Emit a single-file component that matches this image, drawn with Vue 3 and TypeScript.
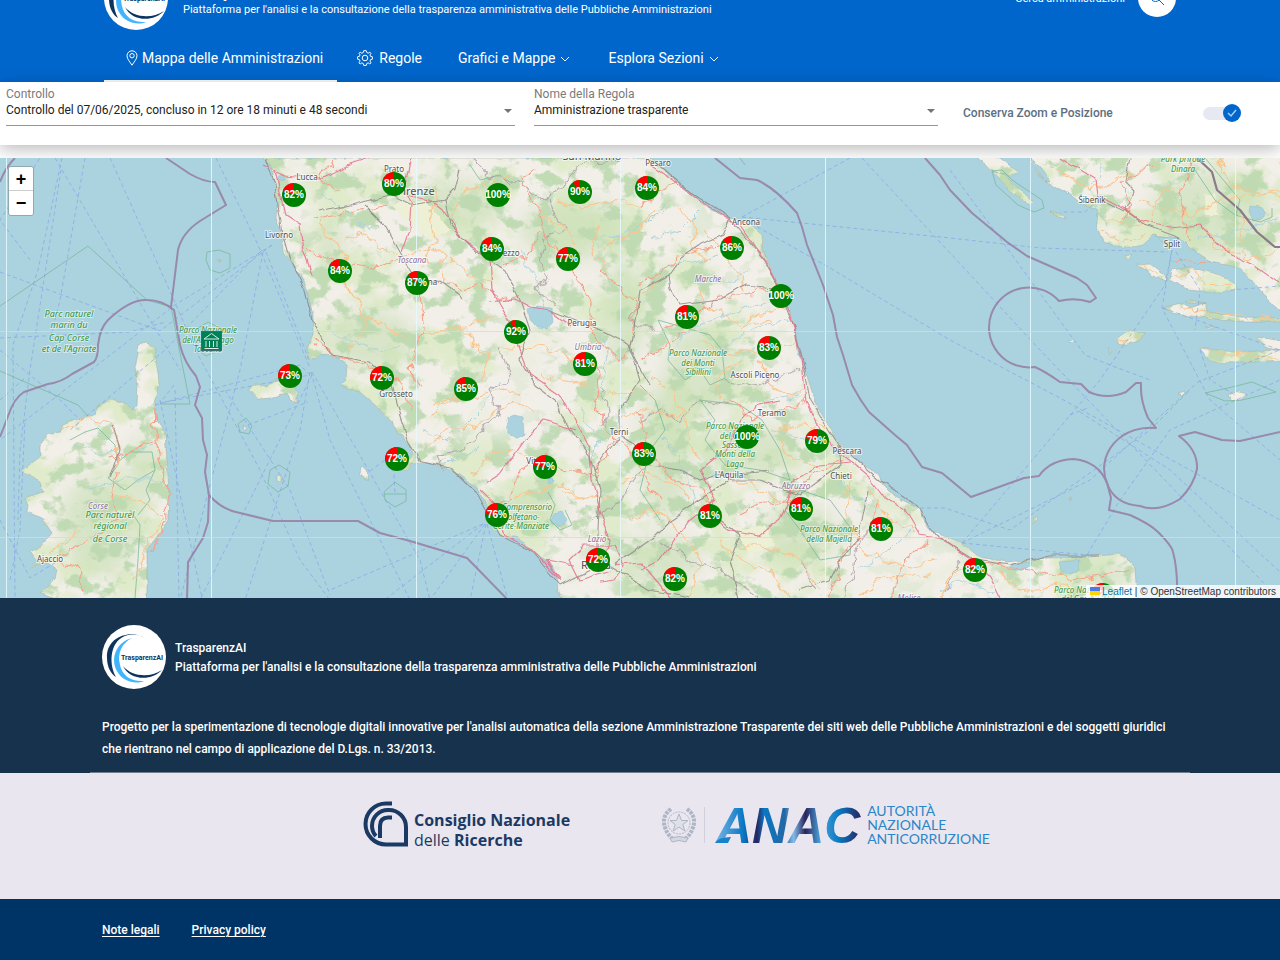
<script setup lang="ts">
import { ref } from 'vue'

interface Marker { x: number; y: number; pct: number }
interface Place { x: number; y: number; text: string; kind: 'town' | 'city' | 'region' | 'park' | 'bigpark' }

const keepView = ref(true)
const control = ref('Controllo del 07/06/2025, concluso in 12 ore 18 minuti e 48 secondi')
const rule = ref('Amministrazione trasparente')

const markers: Marker[] = [
  [294, 195, 82], [394, 184, 80], [498, 195, 100], [580, 192, 90], [647, 188, 84],
  [492, 249, 84], [568, 259, 77], [732, 248, 86], [340, 271, 84], [417, 283, 87],
  [781, 296, 100], [516, 332, 92], [687, 317, 81], [769, 348, 83], [585, 364, 81],
  [290, 376, 73], [382, 378, 72], [466, 389, 85], [397, 459, 72], [545, 467, 77],
  [644, 454, 83], [747, 437, 100], [817, 441, 79], [497, 515, 76], [710, 516, 81],
  [801, 509, 81], [881, 529, 81], [598, 560, 72], [675, 579, 82], [975, 570, 82], [1103, 595, 82],
].map(([x, y, pct]) => ({ x, y, pct }))

function wedge(m: Marker): string {
  const a = ((100 - m.pct) / 100) * Math.PI * 2
  const x = (m.x - Math.sin(a) * 12).toFixed(2)
  const y = (m.y - Math.cos(a) * 12).toFixed(2)
  return `M${m.x} ${m.y}V${m.y - 12}A12 12 0 0 0 ${x} ${y}Z`
}

const places: Place[] = [
  { x: 307, y: 180, text: 'Lucca', kind: 'town' },
  { x: 394, y: 172, text: 'Prato', kind: 'town' },
  { x: 416, y: 195, text: 'Firenze', kind: 'city' },
  { x: 658, y: 166, text: 'Pesaro', kind: 'town' },
  { x: 279, y: 238, text: 'Livorno', kind: 'town' },
  { x: 507, y: 256, text: 'Arezzo', kind: 'town' },
  { x: 427, y: 285, text: 'Siena', kind: 'town' },
  { x: 582, y: 326, text: 'Perugia', kind: 'town' },
  { x: 746, y: 225, text: 'Ancona', kind: 'town' },
  { x: 755, y: 378, text: 'Ascoli Piceno', kind: 'town' },
  { x: 772, y: 416, text: 'Teramo', kind: 'town' },
  { x: 847, y: 454, text: 'Pescara', kind: 'town' },
  { x: 841, y: 479, text: 'Chieti', kind: 'town' },
  { x: 729, y: 478, text: 'L\'Aquila', kind: 'town' },
  { x: 619, y: 435, text: 'Terni', kind: 'town' },
  { x: 540, y: 464, text: 'Viterbo', kind: 'town' },
  { x: 396, y: 397, text: 'Grosseto', kind: 'town' },
  { x: 596, y: 569, text: 'Roma', kind: 'city' },
  { x: 50, y: 562, text: 'Ajaccio', kind: 'town' },
  { x: 1172, y: 247, text: 'Split', kind: 'town' },
  { x: 1092, y: 203, text: 'Šibenik', kind: 'town' },
  { x: 592, y: 160, text: 'San Marino', kind: 'city' },
  { x: 412, y: 263, text: 'Toscana', kind: 'region' },
  { x: 588, y: 350, text: 'Umbria', kind: 'region' },
  { x: 708, y: 282, text: 'Marche', kind: 'region' },
  { x: 796, y: 489, text: 'Abruzzo', kind: 'region' },
  { x: 597, y: 542, text: 'Lazio', kind: 'region' },
  { x: 98, y: 509, text: 'Corse', kind: 'region' },
  { x: 909, y: 601, text: 'Molise', kind: 'region' },
  { x: 69, y: 317, text: 'Parc naturel', kind: 'bigpark' },
  { x: 69, y: 328, text: 'marin du', kind: 'bigpark' },
  { x: 69, y: 341, text: 'Cap Corse', kind: 'bigpark' },
  { x: 69, y: 352, text: 'et de l\'Agriate', kind: 'bigpark' },
  { x: 110, y: 518, text: 'Parc naturel', kind: 'bigpark' },
  { x: 110, y: 529, text: 'régional', kind: 'bigpark' },
  { x: 110, y: 542, text: 'de Corse', kind: 'bigpark' },
  { x: 208, y: 333, text: 'Parco Nazionale', kind: 'park' },
  { x: 208, y: 343, text: 'dell\'Arcipelago', kind: 'park' },
  { x: 208, y: 352, text: 'Toscano', kind: 'park' },
  { x: 698, y: 356, text: 'Parco Nazionale', kind: 'park' },
  { x: 698, y: 366, text: 'dei Monti', kind: 'park' },
  { x: 698, y: 375, text: 'Sibillini', kind: 'park' },
  { x: 735, y: 429, text: 'Parco Nazionale', kind: 'park' },
  { x: 735, y: 439, text: 'del Gran', kind: 'park' },
  { x: 735, y: 448, text: 'Sasso e', kind: 'park' },
  { x: 735, y: 457, text: 'Monti della', kind: 'park' },
  { x: 735, y: 467, text: 'Laga', kind: 'park' },
  { x: 829, y: 532, text: 'Parco Nazionale', kind: 'park' },
  { x: 829, y: 542, text: 'della Majella', kind: 'park' },
  { x: 527, y: 510, text: 'Comprensorio', kind: 'park' },
  { x: 522, y: 520, text: 'Tolfetano-', kind: 'park' },
  { x: 521, y: 529, text: 'Cerite-Manziate', kind: 'park' },
  { x: 1183, y: 162, text: 'Park prirode', kind: 'park' },
  { x: 1183, y: 172, text: 'Dinara', kind: 'park' },
  { x: 1083, y: 593, text: 'Parco Nazionale', kind: 'park' },
  { x: 1083, y: 602, text: 'del Gargano', kind: 'park' },
]

const italy = 'M263 158L272 168L275 185L277 205L276 218L282 235L283 252L293 263L302 278L308 295L313 315L313 335L307 347L308 359L315 359L320 355L335 356L347 365L346 380L341 385L350 390L360 392L375 405L387 417L393 423L398 434L403 436L410 447L412 455L402 468L408 471L412 463L422 462L443 467L460 475L477 488L483 498L493 515L500 537L517 537L533 552L550 563L557 575L558 593L562 600H1136L1136 585L1135 567L1126 558L1118 554L1089 557L1048 558L1007 562L979 557L962 543L930 530L922 518L920 508L895 497L883 485L879 475L860 463L840 445L832 432L815 402L807 375L805 372L798 352L795 328L788 308L777 285L770 268L763 248L762 235L748 223L730 218L712 210L692 195L673 178L650 158Z'
const corsica = 'M138 345L147 343L156 347L155 358L158 372L159 385L154 403L155 417L165 433L167 462L169 492L168 520L158 535L147 550L147 600H57L40 593L47 587L55 578L57 570L48 563L43 563L30 568L37 562L30 552L40 547L52 533L42 518L27 512L28 505L25 498L43 492L40 482L30 475L22 471L32 463L40 457L40 445L48 435L60 432L63 425L80 418L95 415L98 405L110 399L123 402L132 410L137 405L138 385L135 368L138 355Z'
const elba = 'M249 390L255 383L267 387L277 380L290 378L297 392L297 402L290 400L287 393L273 398L257 399Z'
const croatia = 'M1027 156L1040 175L1053 187L1067 192L1083 205L1097 210L1097 227L1103 242L1123 248L1143 244L1153 235L1180 238L1190 248L1210 262L1237 267L1250 278L1267 298L1282 312V156Z'
const islands = 'M1172 270L1190 267L1220 275L1237 285L1235 290L1215 293L1190 290L1170 280ZM1137 265L1150 264L1165 275L1167 281L1155 277ZM1163 308L1180 303L1190 308L1205 303L1208 312L1240 317L1282 318V322L1240 322L1200 317L1180 315ZM1117 337L1130 330L1145 333L1138 342L1120 345ZM1200 348L1235 352L1282 350V360L1240 363L1210 362ZM1257 337L1282 341V350L1265 348ZM977 156L1000 158L1018 172L1012 176L990 170ZM994 172L1004 174L1020 190L1034 202L1028 204L1010 192ZM1030 158L1040 166L1050 182L1044 180ZM1050 211L1060 214L1066 219L1058 217ZM1125 256L1132 255L1128 260ZM1205 327L1216 327L1210 329ZM1068 341L1075 339L1071 343ZM1109 346L1112 352L1109 355ZM1228 395L1236 391L1246 394L1241 400L1232 401ZM1178 393L1186 391L1182 395ZM1205 303L1190 300L1186 303ZM243 425L247 428L244 431ZM277 475L281 476L281 482L277 481ZM361 467L367 470L370 480L365 480L360 474ZM1031 522L1036 515L1037 518L1033 524ZM1069 499L1071 498L1071 501ZM218 259L221 259L220 262Z'

const lakes = 'M528 310L537 306L551 308L553 322L548 328L538 327L530 320ZM507 418L514 415L523 417L524 435L518 439L508 433ZM553 514L562 512L567 520L561 527L552 522ZM549 478L554 480L553 484L548 483ZM278 176L284 175L286 180L280 181ZM1013 564L1032 562L1030 567L1018 570L1010 568ZM1060 562L1080 560L1079 570L1070 574L1062 571ZM1250 206L1260 207L1265 212L1264 218L1253 220L1249 212ZM1155 236L1172 237L1180 242L1168 244Z'

const borders = [
  'M15 158Q5 168 0 182',
  'M166 158L190 174Q204 182 215 182L226 205L200 221Q182 233 178 250L171 307',
  'M0 437Q6 422 8 416Q14 398 24 392L48 384Q62 382 72 374L94 362Q98 358 98 345Q100 328 108 320Q130 299 147 300Q162 300 174 310L180 345Q184 362 196 376L200 387L195 405L202 418L203 440L207 455L205 472L209 495L208 522L203 538L188 562L187 600',
  'M209 495Q222 510 240 513L273 521H358L380 533L410 541L467 558L508 600',
  'M715 158L740 178L757 180Q775 188 797 213L802 227L807 245L823 285L833 315L837 337L843 355L849 375L852 385Q860 400 869 412L895 435L907 445L922 467L942 473L971 497L1024 478L1039 476Q1050 460 1073 459Q1098 461 1107 483L1111 498L1109 510L1130 515Q1150 524 1158 532Q1172 546 1173 552Q1178 570 1177 600',
  'M1107 483A46 41 0 0 1 1156 428L1148 418Q1140 400 1141 383H1136L1126 392Q1107 400 1089 392L1081 384L1060 382Q1046 372 1035 367A40 40 0 1 1 1059 301Q1075 297 1090 302L1096 298L1087 285L1077 278L1027 256L1007 242L972 213L950 190L940 175L925 158',
  'M1107 483Q1114 504 1140 506Q1158 513 1180 499Q1194 485 1197 469Q1198 450 1179 436L1195 432L1222 440L1240 441L1280 432',
]

const ferries = [
  'M55 158L115 260L150 320L180 370', 'M110 158L165 280L198 355L260 470L300 560L330 600', 'M62 158L38 270L13 345L15 600', 'M30 260L0 220L40 158', 'M61 170L30 370L20 450L18 520', 'M0 272L160 331L272 245', 'M272 245L175 305L0 440', 'M262 250L165 350L70 430', 'M263 252L240 370L180 600', 'M266 252L310 362', 'M216 158L258 245L310 368', 'M0 338L130 332L165 322', 'M155 405L300 365L310 375L160 403L174 385', 'M310 372L300 430L245 600', 'M311 372L330 440L410 600', 'M312 372L420 560L430 600', 'M225 390L290 490L330 595', 'M248 425L308 402', 'M312 375L200 600', 'M483 524L330 590', 'M483 524L387 598', 'M485 524L430 600', 'M486 524L470 600', 'M487 524L508 600', 'M370 471L393 454L395 494', 'M175 390L179 600', 'M160 400L202 598', 'M0 350L60 400L80 420', 'M0 520L30 578L60 560', 'M10 580L20 530L25 420', 'M742 217L850 158', 'M742 217L950 238L1040 248L1168 252', 'M745 220L830 268L950 340L1060 398L1280 520', 'M862 158L1040 350L1280 600', 'M950 170L1085 355L1110 365L1150 380', 'M962 543L1100 380L1165 285L1172 250', 'M1172 250L1162 308L1210 400L1280 460', 'M1176 252L1200 290L1195 330', 'M962 543L1090 480L1198 382L1280 350', 'M920 508H945L980 520L1010 530L1150 430L1190 390', 'M962 543L1087 555L1120 500L1170 430L1280 380', 'M1080 412L1170 470L1280 572', 'M1070 415L1090 407', 'M1163 308L1280 350', 'M1230 290L1280 286', 'M1098 200L1085 212L1060 212', 'M1200 350L1210 380L1235 395', 'M0 400L25 378', 'M85 158L60 300L50 340',
]

const reserves = [
  'M0 306L88 246L147 300L171 307L190 404L160 404M0 371L78 405L88 416', 'M207 252L219 250L230 254L230 268L220 273L210 270L206 260Z', 'M195 330L208 322L222 329L220 350L206 356L196 348Z',
  'M238 424L246 418L252 426L249 434L240 432Z', 'M270 470L279 465L290 472L288 486L278 492L268 484Z', 'M384 492L395 482L406 490V501L395 507L385 500ZM384 494H406', 'M992 171L1002 170L1012 180L1042 200L1044 208L1034 212L1018 205L996 185Z', 'M1205 393L1228 388L1252 382L1276 392L1242 400L1225 401Z',
  'M1195 170L1215 200L1235 215L1260 222L1272 217L1272 208M1205 158L1240 200L1235 218', 'M70 440L85 432L98 428L115 445L118 465L108 478L125 490L138 480L155 470M118 462L130 452H152L155 470L146 490L150 500L138 515M130 510L140 525L138 560L135 598', 'M548 492L555 505L550 520L560 530L572 525L565 510', 'M658 320L670 345L668 360L685 380L700 370L710 385L725 378L722 350L710 335Z', 'M700 400L715 420L705 440L725 465L760 470L790 480L780 450L762 420L740 405Z', 'M785 510L800 530L820 560L850 555L852 530L830 500L800 490Z', 'M740 158L745 165M470 165L480 180L500 175L510 185', 'M640 385L655 400L665 430L650 450L640 490L660 520',
]

const motorways = ['M263 165L285 175L320 178L350 165L372 158', 'M275 170L285 215L300 225L303 250L312 275', 'M392 190L410 196L430 200L445 212L462 238L475 247L490 258L492 290L500 305L515 330L520 350L530 375L560 395L575 420L590 450L592 480L600 510L610 540L600 560', 'M412 158L405 190L412 205L410 230L402 252', 'M490 302L515 299L530 307L550 310L570 325', 'M650 165L675 182L705 205L722 215L740 226L755 248L766 262L778 285L790 312L798 345L803 370L806 402L820 430L835 450L855 465L870 478L885 498L905 510L920 535L945 540L975 562L990 578L1000 598', 'M640 570L660 560L690 520L715 500L700 470L725 450L740 420L755 405L780 400', 'M610 570L580 580L570 560L585 545L615 545L625 565L615 580L600 582', 'M615 565L640 562L670 598', 'M710 515L730 530L760 535L780 520L795 480L820 465L850 462', 'M480 490L495 505L505 535L530 548L560 580', 'M1060 158L1095 180L1097 195L1125 210L1140 220L1170 228L1200 225L1225 250L1255 265L1280 283', 'M575 430L545 420L525 440L500 475L485 485', 'M575 565L545 560L560 578']

const trunks = ['M316 220L335 215L360 208L390 205', 'M314 340L345 360L380 370L402 385L410 410', 'M420 285L422 330L412 370L420 390', 'M420 283L450 282L465 290L480 285L500 300L520 295', 'M500 265L525 258L540 235', 'M535 170L520 180L535 205L545 235L570 265L590 300L590 325L600 345L620 360L635 340L635 300L600 270', 'M640 205L660 190L680 178', 'M638 285L665 270L680 255L710 248L740 246', 'M660 330L690 318L715 300L745 293L780 288', 'M640 360L670 342L690 330', 'M600 365L595 400L605 430L625 445L640 470L660 500', 'M547 455L520 470L510 500L495 510', 'M545 465L570 470L595 475L615 440', 'M650 455L675 480L700 490L715 515', 'M730 400L750 420L780 410L805 400', 'M845 460L810 475L790 500L760 505L740 515', 'M880 498L870 530L840 560L830 598', 'M930 540L905 560L890 598', 'M1125 220L1130 205L1120 185L1150 165', 'M1190 158L1180 200L1190 240', 'M1172 260L1210 262', 'M156 405L155 440L166 480L168 520L150 555', 'M113 458L140 445L155 440M115 470L112 500L118 520L80 545L50 560L75 565L85 590', 'M310 250L340 265L370 268L402 260', 'M330 160L320 180L340 190', 'M640 410L645 440L650 455', 'M980 565L1030 570L1070 580L1100 575L1130 570']

const minor = ['M320 220L330 240L345 255L340 280L360 300L365 330L350 350', 'M345 240L365 230L380 250L400 255L430 250L445 255L440 280', 'M360 315L385 325L405 340L425 335L445 330L470 325L495 315', 'M440 185L430 210L435 240L425 260', 'M450 215L465 190L485 185L510 175', 'M450 258L470 275L490 280', 'M460 330L475 345L490 355L480 380L465 390L445 400L430 420', 'M430 405L455 400L480 395L505 390L520 395', 'M430 445L450 430L480 425L500 410L520 400L540 410', 'M470 475L490 455L510 450L530 455', 'M500 350L530 345L560 350L580 365', 'M540 375L560 380L590 385', 'M600 250L615 240L640 230L655 210', 'M560 200L580 210L610 200L640 205', 'M540 215L560 225L575 245', 'M600 225L590 250L605 270', 'M620 300L650 290L665 270', 'M680 210L695 230L690 250L710 260', 'M705 230L720 245L735 270L745 290', 'M700 290L705 305L740 325L770 320', 'M740 330L755 315L785 310', 'M700 340L730 355L760 350L795 345', 'M720 400L715 380L740 360', 'M760 360L770 385L790 395L810 390', 'M650 380L670 390L685 410L690 440L700 460', 'M600 395L630 390L650 395', 'M620 420L640 410L670 415L690 410', 'M620 480L650 475L670 480L690 500', 'M630 520L655 510L680 530L700 560L690 598', 'M560 490L590 500L610 495', 'M515 500L540 490L560 485L590 500', 'M720 540L740 560L770 570L790 598', 'M740 550L760 545L800 560L820 590', 'M770 430L800 425L825 430', 'M780 440L790 460L820 465', 'M730 480L760 490L780 500', 'M850 480L845 510L860 540', 'M870 490L890 520L915 530', 'M855 545L880 560L910 565L940 560', 'M940 598L950 575L970 565', 'M860 598L880 580L930 575', 'M1000 570L1020 590L1060 585L1080 590', 'M1100 220L1130 225L1150 220', 'M1100 230L1120 240L1145 235', 'M1050 165L1075 180L1090 190L1130 175L1160 160', 'M1140 200L1170 210L1190 215L1220 200L1280 190', 'M1150 215L1160 195L1180 190', 'M1240 215L1245 260L1280 250', 'M1220 160L1230 185L1280 195', 'M1205 225L1215 245L1240 255', 'M1175 275L1195 270L1205 285L1235 283', 'M1180 308L1205 312L1280 320', 'M1205 352L1280 358', 'M1120 342L1140 335', 'M62 430L85 420L110 425L118 445L115 465', 'M115 495L140 500L165 520L150 540L135 580', 'M48 550L60 545L80 530', 'M1140 265L1160 275']

const rails = ['M265 158L275 185L283 235L290 260L305 290L313 320L330 355L370 362L390 380L398 410L408 440L420 462L450 468L478 495L500 535L530 550L560 585L590 570', 'M320 212L350 205L370 200L390 195L410 205L445 200L450 225L470 245L490 260L505 270L520 300L530 330L520 360L535 385L555 400L570 430L590 455L600 490L598 530L598 560', 'M365 205L385 225L400 252L420 285L440 280L460 295L462 300', 'M650 158L690 192L730 218L722 235L700 245L680 258L668 275L650 285L640 290L635 330L630 350L650 385', 'M730 218L765 262L780 290L795 330L805 370L810 400L838 445L880 480L920 508L935 535L975 560L1010 565L1050 555L1100 555', 'M620 435L605 455L595 470M620 435L635 445L650 465L680 470L700 480L715 475L770 470', 'M838 445L840 465L800 495L785 490L760 480L730 480L700 500L670 520L650 540L615 565', 'M550 310L575 320L600 330L630 345L640 380L620 410L620 435', 'M715 515L740 535L730 560L740 598', 'M868 490L858 540L840 560L830 580L800 590', 'M600 560L625 575L650 590L690 598', 'M1130 158L1125 180L1135 190L1125 210L1145 225L1180 238', 'M1100 200L1125 212', 'M113 425L120 450L110 480', 'M460 170L455 190L445 200', 'M668 275L670 290L680 305L720 300L745 285L775 288']

const rivers = ['M320 195L340 205L360 225L380 230', 'M330 330L350 340L380 350L400 345', 'M520 250L530 270L540 290L545 310', 'M600 240L620 235L650 220L670 200', 'M650 240L680 230L700 210', 'M660 270L690 262L720 255', 'M680 340L700 325L740 310L780 300', 'M700 280L730 280L750 270', 'M720 350L760 325L790 320', 'M600 330L610 360L600 390', 'M580 410L600 440L590 470', 'M420 430L450 440L480 410L500 380', 'M430 480L450 460L480 450', 'M770 400L800 395', 'M780 430L820 440', 'M840 480L860 500L880 510', 'M660 440L680 460L700 510', 'M860 570L890 550L910 530', 'M940 590L960 580L990 590', 'M75 445L100 455L130 450L155 445', 'M90 490L120 480L165 480', 'M1100 215L1090 190L1105 165', 'M1200 240L1240 230L1280 220']

const admin = ['M470 158L490 175L520 185L545 200L560 190L580 165L620 160', 'M550 200L555 215L565 230L545 240L540 260L550 280L535 290L555 305', 'M640 300L630 320L655 330', 'M500 350L510 380L490 390L500 415L480 430L465 450L440 455L445 470', 'M600 390L610 410L600 425', 'M640 420L660 410L680 420L700 400L730 405', 'M590 520L620 500L640 470L660 460', 'M660 540L690 560L720 570L760 598', 'M800 560L815 590', 'M870 530L855 555L845 598', 'M960 560L945 590', 'M720 380L760 385L800 370']

const bosnia = 'M1197 158L1212 172L1217 190L1240 210L1257 232L1275 247L1280 247'
</script>

<template>
  <div class="page">
    <header class="header">
      <div class="container header-inner">
        <div class="brand-row">
          <svg class="logo" viewBox="0 0 64 64" aria-hidden="true">
            <circle cx="32" cy="32" r="32" fill="#fff" />
            <path d="M43 13C28 4 4 12 5 33C5 42 9 49 14 52C6 38 8 14 26 10C33 9 39 10 43 13Z" fill="#0b3560" />
            <path d="M30 13C14 17 8 34 15 46C20 56 33 60 42 56C30 57 20 51 18 40C15 28 20 18 30 13Z" fill="#3fb4ff" />
            <path d="M21 41C30 52 48 53 60 45C50 56 28 56 21 41Z" fill="#0b3560" />
            <text x="19" y="35" font-size="7" font-weight="700" fill="#0b3560">TrasparenzAI</text>
          </svg>
          <div class="brand-text">
            <strong class="brand-name">TrasparenzAI</strong>
            <span class="brand-tag">Piattaforma per l'analisi e la consultazione della trasparenza amministrativa delle Pubbliche Amministrazioni</span>
          </div>
          <div class="search">
            <span>Cerca amministrazioni</span>
            <button class="search-button" type="button" aria-label="Cerca amministrazioni">
              <svg viewBox="0 0 16 16" width="16" height="16" fill="none" stroke="#06c"><circle cx="6.5" cy="6.5" r="5" /><path d="M10 10L15 15" /></svg>
            </button>
          </div>
        </div>
        <nav class="nav">
          <a href="#mappa" class="nav-link active">
            <svg width="12" height="16" viewBox="0 0 12 16" fill="none" stroke="#fff"><path d="M6 15.2C4 12 1 9 1 5.8A5 5 0 0 1 11 5.800C11 9 8 12 6 15.200Z" /><circle cx="6" cy="5.700" r="2.200" /></svg>
            <span>Mappa delle Amministrazioni</span>
          </a>
          <a href="#regole" class="nav-link rules">
            <svg width="16" height="16" viewBox="0 0 16 16" fill="none" stroke="#fff"><circle cx="8" cy="8" r="2.800" /><path d="M6.700 .7H9.300L9.800 2.600L11.200 3.200L12.900 2.200L14 3.300L13 4.900L13.500 6.300L15.400 6.800V9.200L13.500 9.700L13 11.100L14 12.800L12.800 14L11.200 12.900L9.800 13.500L9.300 15.400H6.700L6.200 13.500L4.800 12.900L3.200 14L2 12.800L3 11.100L2.500 9.700L.6 9.200V6.800L2.500 6.300L3 4.900L2 3.300L3.200 2.100L4.800 3.200L6.200 2.600Z" /></svg>
            <span>Regole</span>
          </a>
          <button type="button" class="nav-link drop">
            <span>Grafici e Mappe</span>
            <svg class="chevron" width="10" height="6" viewBox="0 0 10 6" fill="none" stroke="#fff"><path d="M1 1L5 5L9 1" /></svg>
          </button>
          <button type="button" class="nav-link drop">
            <span>Esplora Sezioni</span>
            <svg class="chevron" width="10" height="6" viewBox="0 0 10 6" fill="none" stroke="#fff"><path d="M1 1L5 5L9 1" /></svg>
          </button>
        </nav>
      </div>
    </header>

    <form class="filters" @submit.prevent>
      <div class="field">
        <label for="control">Controllo</label>
        <select id="control" v-model="control">
          <option>Controllo del 07/06/2025, concluso in 12 ore 18 minuti e 48 secondi</option>
        </select>
      </div>
      <div class="field">
        <label for="rule">Nome della Regola</label>
        <select id="rule" v-model="rule">
          <option>Amministrazione trasparente</option>
        </select>
      </div>
      <div class="toggle">
        <label for="keep">Conserva Zoom e Posizione</label>
        <span class="switch">
          <input id="keep" v-model="keepView" type="checkbox">
          <svg class="tick" width="12" height="10" viewBox="0 0 12 10" fill="none" stroke="#a9cdf5" stroke-width="1.500"><path d="M2 5L5 8L10 2" /></svg>
        </span>
      </div>
    </form>

    <main class="map">
      <svg class="map-canvas" viewBox="0 158 1280 440" preserveAspectRatio="xMidYMid slice" role="img" aria-label="Mappa delle Amministrazioni">
        <defs>
          <clipPath id="land"><path :d="italy + corsica + elba + croatia + islands" /></clipPath>
          <filter id="forest" x="0" y="0" width="100%" height="100%" color-interpolation-filters="sRGB">
            <feTurbulence type="fractalNoise" baseFrequency="0.045 0.052" numOctaves="5" seed="11" />
            <feColorMatrix values="0 0 0 0 .74  0 0 0 0 .85  0 0 0 0 .69  8 0 0 0 -4.200" />
          </filter>
          <filter id="meadow" x="0" y="0" width="100%" height="100%" color-interpolation-filters="sRGB">
            <feTurbulence type="fractalNoise" baseFrequency="0.020 0.024" numOctaves="4" seed="5" />
            <feColorMatrix values="0 0 0 0 .88  0 0 0 0 .92  0 0 0 0 .80  0 7 0 0 -3.400" />
          </filter>
          <filter id="wiggle" x="-5%" y="-5%" width="110%" height="110%">
            <feTurbulence type="fractalNoise" baseFrequency="0.07" numOctaves="3" seed="3" result="n" />
            <feDisplacementMap in="SourceGraphic" in2="n" scale="14" xChannelSelector="R" yChannelSelector="G" />
          </filter>
          <filter id="coast" x="-2%" y="-2%" width="104%" height="104%">
            <feTurbulence type="fractalNoise" baseFrequency="0.12" numOctaves="2" seed="9" result="n" />
            <feDisplacementMap in="SourceGraphic" in2="n" scale="4" xChannelSelector="R" yChannelSelector="G" />
          </filter>
          <filter id="bend" x="-2%" y="-2%" width="104%" height="104%">
            <feTurbulence type="fractalNoise" baseFrequency="0.06" numOctaves="2" seed="9" result="n" />
            <feDisplacementMap in="SourceGraphic" in2="n" scale="7" xChannelSelector="R" yChannelSelector="G" />
          </filter>
          <filter id="soft"><feGaussianBlur stdDeviation="9" /></filter>
        </defs>

        <rect x="-400" y="100" width="2080" height="560" fill="#aad3df" />

        <g filter="url(#coast)">
          <g clip-path="url(#land)">
            <rect y="150" width="1290" height="460" fill="#f2efe9" />
            <rect y="150" width="1290" height="460" filter="url(#meadow)" />
            <g fill="#c6deb2" opacity=".6" filter="url(#soft)">
              <ellipse cx="370" cy="340" rx="45" ry="30" /><ellipse cx="455" cy="205" rx="45" ry="25" /><ellipse cx="330" cy="245" rx="14" ry="28" />
              <ellipse cx="100" cy="525" rx="40" ry="50" /><ellipse cx="145" cy="470" rx="16" ry="35" /><ellipse cx="700" cy="370" rx="35" ry="45" />
              <ellipse cx="750" cy="450" rx="50" ry="25" /><ellipse cx="665" cy="450" rx="25" ry="70" /><ellipse cx="800" cy="535" rx="38" ry="30" />
              <ellipse cx="660" cy="560" rx="40" ry="25" /><ellipse cx="575" cy="230" rx="55" ry="30" /><ellipse cx="625" cy="310" rx="22" ry="50" />
              <ellipse cx="1210" cy="215" rx="60" ry="45" /><ellipse cx="1105" cy="575" rx="28" ry="12" /><ellipse cx="528" cy="510" rx="35" ry="20" />
            </g>
            <rect y="150" width="1290" height="460" filter="url(#forest)" opacity=".92" />
            <g fill="#f2efe9" opacity=".75" filter="url(#soft)">
              <path d="M650 158H670L790 300L812 372L855 455L820 450L785 390L760 340L700 250Z" />
              <path d="M490 300L540 300L560 400L530 440L450 440L500 360ZM870 500L1000 562L980 600H840ZM540 545L610 545L620 600H560ZM290 180L320 200L310 250L290 230Z" />
            </g>
            <path d="M735 530L765 525L775 545L750 555ZM390 205L425 200L450 230L430 240ZM1205 195L1215 193L1218 215L1206 215Z" fill="#eef0d5" />
          </g>
          <path :d="italy + corsica + elba + croatia + islands" fill="none" stroke="#9aa7a0" stroke-width=".8" opacity=".6" />
          <path :d="lakes" fill="#aad3df" stroke="#92bcc9" stroke-width=".5" />
        </g>

        <g fill="none" stroke-linejoin="round">
          <g stroke="#76b699" stroke-width="1" opacity=".75"><path v-for="d in reserves" :key="d" :d="d" /></g>
          <g filter="url(#wiggle)">
            <g stroke="#a9d1df" stroke-width=".9"><path v-for="d in rivers" :key="d" :d="d" /></g>
            <g stroke="#aa98aa" stroke-width="1.200" opacity=".75"><path v-for="d in admin" :key="d" :d="d" /></g>
            <g stroke="#fac58e" stroke-width="1.200"><path v-for="d in minor" :key="d" :d="d" /></g>
            <g stroke="#f6a188" stroke-width="1.200"><path v-for="d in trunks" :key="d" :d="d" /></g>
          </g>
          <g filter="url(#bend)">
            <g stroke="#8c8586" stroke-width="1.100" opacity=".8"><path v-for="d in rails" :key="d" :d="d" /></g>
            <g stroke="#e5718d" stroke-width="1.200" opacity=".85"><path v-for="d in motorways" :key="d" :d="d" /></g>
          </g>
          <g stroke="#829de8" stroke-width=".9" stroke-dasharray="4 3" opacity=".7"><path v-for="d in ferries" :key="d" :d="d" /></g>
          <g stroke="#977fa5" stroke-width="2" opacity=".88"><path v-for="d in borders" :key="d" :d="d" /></g>
          <path :d="bosnia" stroke="#8a7a8a" stroke-width="2.200" />
        </g>

        <path d="M6.500 158V598M211.500 158V598M416.500 158V598M620.500 158V598M825.500 158V598M1030.500 158V598M1235.500 158V598" stroke="#e8faff" opacity=".85" />
        <path d="M0 331.500H1280M0 537.500H1280" stroke="#d8dadd" opacity=".8" />

        <text v-for="p in places" :key="p.text + p.x + p.y" :x="p.x" :y="p.y" class="place" :class="p.kind">{{ p.text }}</text>

        <g>
          <rect x="201.500" y="331.500" width="20" height="19" fill="#008055" stroke="#3c6f6b" />
          <path d="M204 339L211.500 333.500L219 339ZM206 341V347M209.500 341V347M213.500 341V347M217 341V347M204.500 348.500H218.500" fill="none" stroke="#d9efe6" />
        </g>

        <g v-for="m in markers" :key="m.x">
          <circle :cx="m.x" :cy="m.y" r="12" fill="#008000" />
          <path :d="wedge(m)" fill="#f00" />
          <text :x="m.x" :y="m.y + 3" class="pct">{{ m.pct }}%</text>
        </g>
      </svg>
      <div class="zoom">
        <button type="button" aria-label="Zoom in">+</button>
        <button type="button" aria-label="Zoom out">−</button>
      </div>
      <div class="attribution">
        <svg class="flag" width="10" height="8" viewBox="0 0 10 8"><path fill="#4c7be1" d="M0 0H10V4H0Z" /><path fill="#ffd500" d="M0 4H10V8H0Z" /></svg>
        <a href="#leaflet">Leaflet</a> | © OpenStreetMap contributors
      </div>
    </main>

    <footer class="footer">
      <div class="footer-main">
        <div class="container footer-inner">
          <div class="footer-brand">
            <svg class="logo" viewBox="0 0 64 64" aria-hidden="true">
              <circle cx="32" cy="32" r="32" fill="#fff" />
              <path d="M43 13C28 4 4 12 5 33C5 42 9 49 14 52C6 38 8 14 26 10C33 9 39 10 43 13Z" fill="#0b3560" />
              <path d="M30 13C14 17 8 34 15 46C20 56 33 60 42 56C30 57 20 51 18 40C15 28 20 18 30 13Z" fill="#3fb4ff" />
              <path d="M21 41C30 52 48 53 60 45C50 56 28 56 21 41Z" fill="#0b3560" />
              <text x="19" y="35" font-size="7" font-weight="700" fill="#0b3560">TrasparenzAI</text>
            </svg>
            <div class="footer-title">
              <span>TrasparenzAI</span>
              <span>Piattaforma per l'analisi e la consultazione della trasparenza amministrativa delle Pubbliche Amministrazioni</span>
            </div>
          </div>
          <p>Progetto per la sperimentazione di tecnologie digitali innovative per l'analisi automatica della sezione Amministrazione Trasparente dei siti web delle Pubbliche Amministrazioni e dei soggetti giuridici che rientrano nel campo di applicazione del D.Lgs. n. 33/2013.</p>
        </div>
      </div>
      <div class="partners">
        <div class="cnr">
          <svg width="46" height="46" viewBox="0 0 46 46" fill="none" stroke="#1b3a63" stroke-width="4">
            <path d="M29 2.500H23A20.500 20.500 0 0 0 2.500 23A20.500 20.500 0 0 0 23 43.500H43V26A17 17 0 0 0 26 9H25A16 16 0 0 0 9 25Q9 31 13 35" />
            <path d="M29 16.500H25Q17 16.500 17 25V37" />
          </svg>
          <div class="cnr-text"><strong>Consiglio Nazionale</strong><span>delle <strong>Ricerche</strong></span></div>
        </div>
        <div class="anac">
          <svg width="34" height="38" viewBox="0 0 34 38" fill="none" stroke="#aeb6c3">
            <path d="M9 3Q-2 11 4 24Q6 29 11 33M25 3Q36 11 30 24Q28 29 23 33" stroke-width="4" stroke-dasharray="3 1" />
            <circle cx="17" cy="17" r="11" stroke-dasharray="2 1" />
            <path d="M17 8L19.500 14.500H26L20.800 18.500L22.800 25L17 21L11.200 25L13.200 18.500L8 14.500H14.500Z" fill="#dfe0e9" />
            <path d="M8 32Q17 29 26 32L24 36Q17 33 10 36Z" fill="#d3d7e0" />
          </svg>
          <span class="anac-rule" />
          <svg width="146" height="38" viewBox="0 0 146 38" role="img" aria-label="ANAC">
            <defs>
              <linearGradient id="ribbon"><stop offset="0" stop-color="#7db7e8" /><stop offset=".2" stop-color="#0878c3" /><stop offset=".29" stop-color="#29235c" /><stop offset=".34" stop-color="#0878c3" /><stop offset=".48" stop-color="#2467a5" /><stop offset=".54" stop-color="#82bce9" /><stop offset=".62" stop-color="#29235c" /><stop offset=".72" stop-color="#4ca2db" /><stop offset=".85" stop-color="#0878c3" /><stop offset="1" stop-color="#29235c" /></linearGradient>
            </defs>
            <text x="1" y="37" class="anac-mark" fill="url(#ribbon)">ANAC</text>
            <path d="M0 37Q3 31 16 31L13 37Z" fill="#1683ca" />
          </svg>
          <div class="anac-text"><span>AUTORITÀ</span><span>NAZIONALE</span><span>ANTICORRUZIONE</span></div>
        </div>
      </div>
      <div class="legal">
        <nav class="container legal-links">
          <a href="#note">Note legali</a>
          <a href="#privacy">Privacy policy</a>
        </nav>
      </div>
    </footer>
  </div>
</template>

<style>
body { background: #fff; }
</style>

<style scoped>
* { box-sizing: border-box; }
.page { font-family: Roboto, "Open Sans", sans-serif; font-size: 13px; color: #1a1a1a; }
.container { max-width: 1100px; margin: 0 auto; }
button { font: inherit; border: 0; background: none; padding: 0; cursor: pointer; }
.header { height: 82px; overflow: hidden; background: #06c; color: #fff; }
.header-inner { height: 100%; padding: 0 14px; display: flex; flex-direction: column; justify-content: flex-end; }
.brand-row { flex: none; height: 64px; margin-bottom: 6px; display: flex; align-items: center; gap: 15px; }
.logo { width: 64px; height: 64px; flex: none; }
.brand-text { display: flex; flex-direction: column; }
.brand-name { font-size: 20px; line-height: 22px; font-weight: 600; }
.brand-tag { font-size: 11px; line-height: 17px; }
.search { margin-left: auto; display: flex; align-items: center; gap: 13px; font-size: 11px; }
.search-button { width: 38px; height: 38px; border-radius: 50%; background: #fff; display: flex; align-items: center; justify-content: center; }
.nav { flex: none; display: flex; gap: 6px; height: 46px; }
.nav-link { display: flex; align-items: center; padding: 0 14px; color: #fff; text-decoration: none; font-size: 14px; border-bottom: 2px solid transparent; }
.nav-link.active { padding-left: 22px; gap: 4px; border-bottom-color: #fff; }
.nav-link.rules { gap: 6px; }
.nav-link.drop { padding: 0 16px; }
.chevron { margin: 2px 0 0 5px; }
.filters { position: relative; display: grid; grid-template-columns: 509fr 404fr 284fr; column-gap: 19px; height: 63px; padding: 4px 39px 0 6px; background: #fff; box-shadow: 0 4px 16px rgba(0, 0, 0, .28); }
.field { position: relative; display: flex; flex-direction: column; min-width: 0; }
.field label { font-size: 12px; line-height: 16px; color: #7b7b7b; }
.field select { appearance: none; width: 100%; height: 24px; padding: 0 24px 8px 0; border: 0; border-bottom: 1px solid #949494; border-radius: 0; background: none; font: inherit; font-size: 12px; line-height: 16px; color: #212121; outline: 0; }
.field::after { content: ""; position: absolute; right: 3px; top: 23px; border: 4px solid transparent; border-top-color: #757575; border-bottom: 0; pointer-events: none; }
.toggle { display: flex; align-items: center; justify-content: space-between; height: 54px; padding-left: 6px; font-size: 12px; font-weight: 500; color: #5b6f82; }
.switch { position: relative; width: 38px; height: 18px; display: flex; align-items: center; }
.switch input { appearance: none; margin: 0; width: 38px; height: 13px; border-radius: 7px; background: #e6e9f2; position: relative; }
.switch input::after { content: ""; position: absolute; left: 0; top: -3px; width: 18px; height: 18px; border-radius: 50%; background: #5b6f82; }
.switch input:checked::after { left: 20px; background: #06c; }
.tick { position: absolute; right: 3px; top: 4px; pointer-events: none; }
.map { position: relative; height: 440px; margin-top: 13px; overflow: hidden; background: #aad3df; }
.map-canvas { display: block; width: 100%; height: 100%; }
.place { font-family: "Noto Sans", sans-serif; font-size: 8px; text-anchor: middle; fill: #505050; stroke: #fff; stroke-opacity: .65; stroke-width: 2px; paint-order: stroke; }
.place.city { font-size: 11px; }
.place.region { font-style: italic; fill: #8e6f9c; }
.place.park { font-style: italic; fill: #36943c; stroke-opacity: .45; }
.place.bigpark { font-size: 9px; font-style: italic; fill: #36943c; stroke-opacity: .45; }
.pct { font: 700 10px "Liberation Sans", sans-serif; fill: #fff; text-anchor: middle; }
.zoom { position: absolute; left: 8px; top: 8px; display: flex; flex-direction: column; border: 1px solid #8ea9b2; border-radius: 3px; overflow: hidden; }
.zoom button { width: 24px; height: 24px; background: #fff; color: #000; font: 700 18px/24px "Liberation Sans", sans-serif; }
.zoom button:first-child { border-bottom: 1px solid #ccc; }
.attribution { position: absolute; right: 0; bottom: 0; padding: 0 4px; background: rgba(255, 255, 255, .8); font: 10px/13px "Liberation Sans", sans-serif; color: #333; }
.attribution a { color: #0078a8; text-decoration: none; }
.flag { margin-right: 2px; }
.footer { color: #fff; font-weight: 500; }
.footer-main { background: #17324d; }
.footer-inner { padding: 27px 12px 12px; border-bottom: 1px solid #6f7f8f; }
.footer-brand { display: flex; align-items: center; gap: 9px; }
.footer-title { display: flex; flex-direction: column; padding-top: 2px; line-height: 19px; font-size: 12px; }
.footer p { margin: 27px 0 0; font-size: 12px; line-height: 22px; }
.partners { display: flex; justify-content: center; gap: 92px; min-height: 126px; padding: 28px 0 0 73px; background: #e9e6f0; color: #1b3a63; }
.cnr { display: flex; align-items: flex-start; gap: 5px; }
.cnr-text { display: flex; flex-direction: column; padding-top: 9px; font-family: "Open Sans", sans-serif; font-size: 16px; line-height: 20px; font-weight: 400; }
.anac { display: flex; align-items: center; align-self: flex-start; padding-top: 3px; }
.anac-rule { width: 1px; height: 36px; margin: 0 10px 0 8px; background: #d0d0dc; }
.anac-mark { font: italic 700 50px "Liberation Sans", sans-serif; }
.anac-text { display: flex; flex-direction: column; margin-left: 6px; font-family: Lato, sans-serif; font-size: 14px; line-height: 14px; font-weight: 400; color: #2b87c8; }
.legal { background: #036; }
.legal-links { display: flex; gap: 32px; padding: 21px 12px 19px; line-height: 21px; }
.legal-links a { color: #fff; font-size: 12px; text-underline-offset: 2px; }
</style>
